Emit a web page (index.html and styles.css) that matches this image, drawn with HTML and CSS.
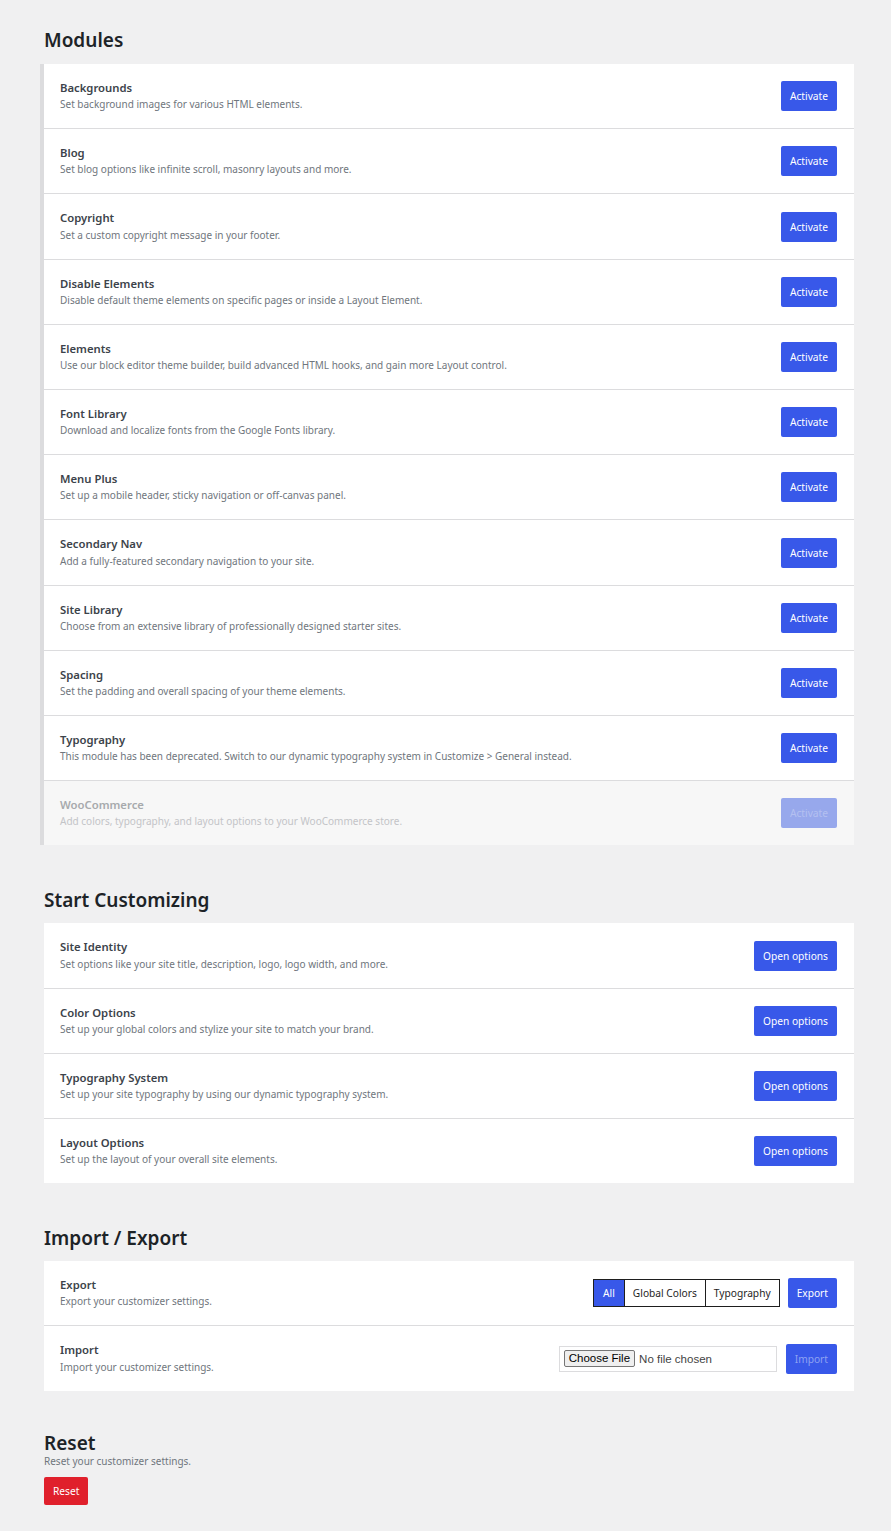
FILE: index.html
```html
<!DOCTYPE html>
<html>
<head>
<meta charset="utf-8">
<link rel="stylesheet" href="styles.css">
</head>
<body>
<main class="page">
  <section class="section">
    <h2 class="section-title section-title-first">Modules</h2>
    <div class="card card-modules">
      <div class="row">
        <div class="row-text"><div class="row-title">Backgrounds</div><div class="row-desc">Set background images for various HTML elements.</div></div>
        <button class="btn">Activate</button>
      </div>
      <div class="row">
        <div class="row-text"><div class="row-title">Blog</div><div class="row-desc">Set blog options like infinite scroll, masonry layouts and more.</div></div>
        <button class="btn">Activate</button>
      </div>
      <div class="row">
        <div class="row-text"><div class="row-title">Copyright</div><div class="row-desc">Set a custom copyright message in your footer.</div></div>
        <button class="btn">Activate</button>
      </div>
      <div class="row">
        <div class="row-text"><div class="row-title">Disable Elements</div><div class="row-desc">Disable default theme elements on specific pages or inside a Layout Element.</div></div>
        <button class="btn">Activate</button>
      </div>
      <div class="row">
        <div class="row-text"><div class="row-title">Elements</div><div class="row-desc">Use our block editor theme builder, build advanced HTML hooks, and gain more Layout control.</div></div>
        <button class="btn">Activate</button>
      </div>
      <div class="row">
        <div class="row-text"><div class="row-title">Font Library</div><div class="row-desc">Download and localize fonts from the Google Fonts library.</div></div>
        <button class="btn">Activate</button>
      </div>
      <div class="row">
        <div class="row-text"><div class="row-title">Menu Plus</div><div class="row-desc">Set up a mobile header, sticky navigation or off-canvas panel.</div></div>
        <button class="btn">Activate</button>
      </div>
      <div class="row">
        <div class="row-text"><div class="row-title">Secondary Nav</div><div class="row-desc">Add a fully-featured secondary navigation to your site.</div></div>
        <button class="btn">Activate</button>
      </div>
      <div class="row">
        <div class="row-text"><div class="row-title">Site Library</div><div class="row-desc">Choose from an extensive library of professionally designed starter sites.</div></div>
        <button class="btn">Activate</button>
      </div>
      <div class="row">
        <div class="row-text"><div class="row-title">Spacing</div><div class="row-desc">Set the padding and overall spacing of your theme elements.</div></div>
        <button class="btn">Activate</button>
      </div>
      <div class="row">
        <div class="row-text"><div class="row-title">Typography</div><div class="row-desc">This module has been deprecated. Switch to our dynamic typography system in Customize &gt; General instead.</div></div>
        <button class="btn">Activate</button>
      </div>
      <div class="row row-disabled">
        <div class="row-text"><div class="row-title">WooCommerce</div><div class="row-desc">Add colors, typography, and layout options to your WooCommerce store.</div></div>
        <button class="btn btn-disabled">Activate</button>
      </div>
    </div>
  </section>

  <section class="section">
    <h2 class="section-title">Start Customizing</h2>
    <div class="card">
      <div class="row">
        <div class="row-text"><div class="row-title">Site Identity</div><div class="row-desc">Set options like your site title, description, logo, logo width, and more.</div></div>
        <button class="btn">Open options</button>
      </div>
      <div class="row">
        <div class="row-text"><div class="row-title">Color Options</div><div class="row-desc">Set up your global colors and stylize your site to match your brand.</div></div>
        <button class="btn">Open options</button>
      </div>
      <div class="row">
        <div class="row-text"><div class="row-title">Typography System</div><div class="row-desc">Set up your site typography by using our dynamic typography system.</div></div>
        <button class="btn">Open options</button>
      </div>
      <div class="row">
        <div class="row-text"><div class="row-title">Layout Options</div><div class="row-desc">Set up the layout of your overall site elements.</div></div>
        <button class="btn">Open options</button>
      </div>
    </div>
  </section>

  <section class="section section-last">
    <h2 class="section-title">Import / Export</h2>
    <div class="card">
      <div class="row">
        <div class="row-text"><div class="row-title">Export</div><div class="row-desc">Export your customizer settings.</div></div>
        <div class="actions">
          <div class="seg">
            <span class="seg-item seg-active">All</span>
            <span class="seg-item">Global Colors</span>
            <span class="seg-item">Typography</span>
          </div>
          <button class="btn">Export</button>
        </div>
      </div>
      <div class="row">
        <div class="row-text"><div class="row-title">Import</div><div class="row-desc">Import your customizer settings.</div></div>
        <div class="actions actions-import">
          <div class="file"><span class="file-btn">Choose File</span><span class="file-label">No file chosen</span></div>
          <button class="btn btn-muted">Import</button>
        </div>
      </div>
    </div>
  </section>

  <section class="reset">
    <h2 class="reset-title">Reset</h2>
    <div class="row-desc">Reset your customizer settings.</div>
    <button class="btn btn-red">Reset</button>
  </section>
</main>
</body>
</html>
```

FILE: styles.css
```css
* { box-sizing: border-box; }
html, body { margin: 0; padding: 0; }
body {
  background: #f0f0f1;
  font-family: "Noto Sans", "Open Sans", sans-serif;
  color: #1e1e1e;
}
.page {
  padding: 28px 37px 25px 44px;
}
.section { margin-bottom: 43px; }
.section-last { margin-bottom: 42px; }
.section-title {
  margin: 0 0 11px;
  font-size: 19px;
  line-height: 24px;
  font-weight: 600;
  color: #1d2327;
}
.section-title-first { margin-bottom: 12px; }
.card {
  background: #fff;
}
.card-modules {
  margin-left: -4px;
  border-left: 4px solid #dcdcde;
}
.row {
  display: flex;
  align-items: center;
  justify-content: space-between;
  padding: 16px 17px 16px 16px;
  border-bottom: 1px solid #dcdcde;
}
.row:last-child { border-bottom: 0; }
.row-title {
  font-size: 11.3px;
  line-height: 16.2px;
  font-weight: 600;
  color: #3c434a;
}
.row-desc {
  font-size: 10px;
  line-height: 16px;
  color: #6f767d;
}
.btn {
  font-family: inherit;
  border: 0;
  border-radius: 2px;
  background: #3858e9;
  color: #fff;
  font-size: 10.2px;
  height: 30px;
  padding: 0 9px;
  cursor: pointer;
  flex-shrink: 0;
}
.row-disabled { background: #f7f7f7; }
.row-disabled .row-title { color: #a7aaad; }
.row-disabled .row-desc { color: #c3c4c7; }
.btn-disabled { background: #97a8ec; color: #b4c0f0; }
.btn-muted { color: #8fa2f2; }
.actions { display: flex; align-items: center; gap: 8px; }
.actions-import { gap: 9px; }
.seg {
  display: flex;
  border: 1px solid #1e1e1e;
  height: 28px;
}
.seg-item {
  display: flex;
  align-items: center;
  padding: 0 8px;
  font-size: 10.2px;
  color: #1e1e1e;
  border-left: 1px solid #1e1e1e;
}
.seg-item:first-child { border-left: 0; }
.seg-active { background: #3858e9; color: #fff; padding: 0 9px; }
.file {
  width: 218px;
  height: 26px;
  border: 1px solid #dcdcde;
  display: flex;
  align-items: center;
  padding-left: 4px;
  gap: 4px;
  font-family: "Liberation Sans", sans-serif;
  font-size: 11.5px;
}
.file-btn {
  border: 1px solid #767676;
  background: #efefef;
  padding: 0 4px;
  line-height: 15px;
  border-radius: 2px;
  color: #000;
}
.file-label { color: #444; }
.reset-title {
  margin: 0;
  font-size: 19px;
  line-height: 20px;
  font-weight: 600;
  color: #1d2327;
}
.reset .row-desc { margin-bottom: 8px; }
.btn-red { background: #e0202c; height: 28px; padding: 0 9px; }
```
